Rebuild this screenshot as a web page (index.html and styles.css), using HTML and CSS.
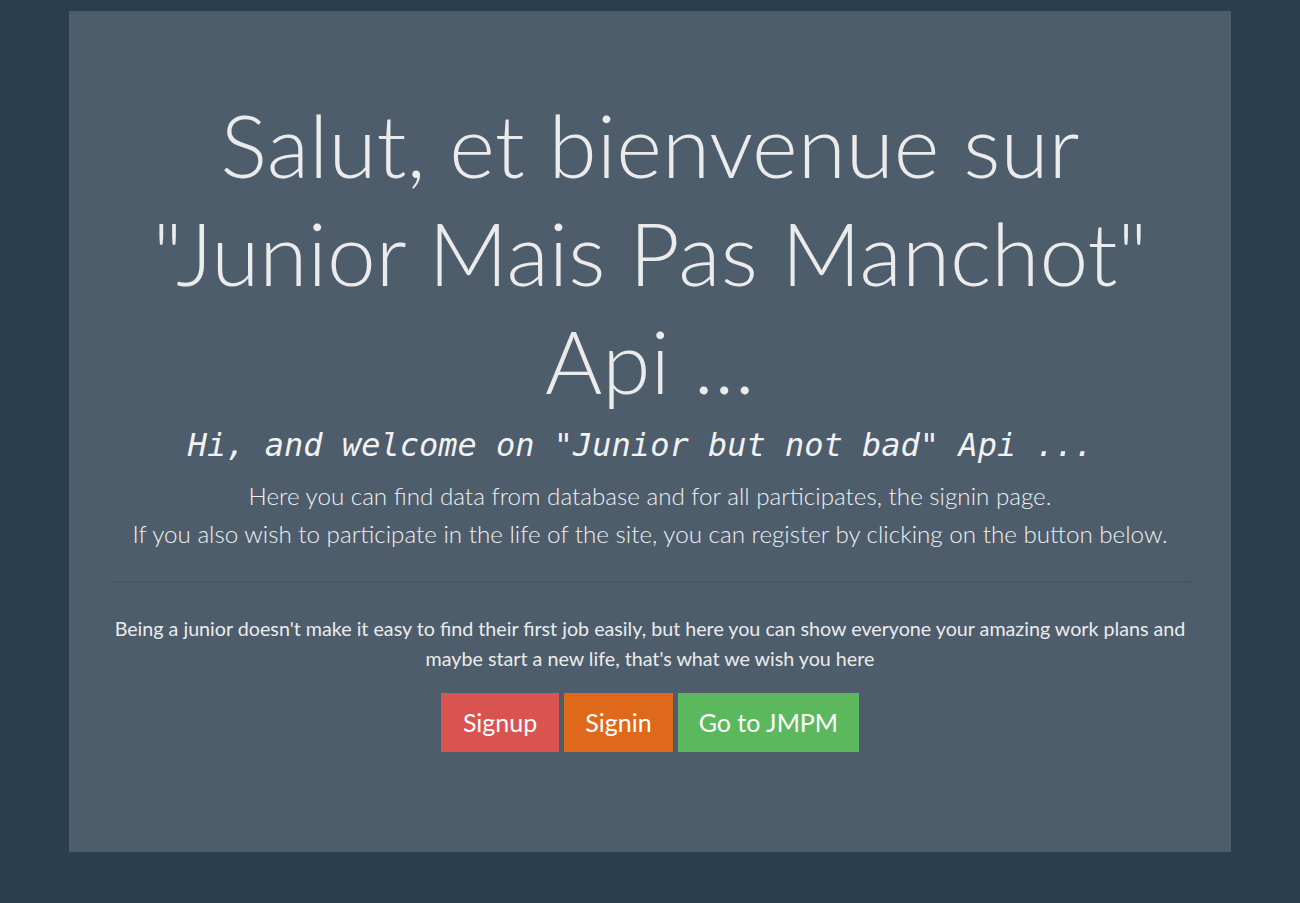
FILE: index.html
```html
<!DOCTYPE html>
<html lang="fr">
<head>
<meta charset="utf-8">
<title>JMPM Api</title>
<link rel="stylesheet" href="styles.css">
</head>
<body>
<div class="page">
  <div class="jumbotron">
    <h1 class="title">Salut, et bienvenue sur "Junior Mais Pas Manchot" Api ...</h1>
    <h3 class="subtitle">Hi, and welcome on "Junior but not bad" Api ...</h3>
    <p class="lead">Here you can find data from database and for all participates, the signin page.<br>If you also wish to participate in the life of the site, you can register by clicking on the button below.</p>
    <hr class="sep">
    <p class="info">Being a junior doesn't make it easy to find their first job easily, but here you can show everyone your amazing work plans and maybe start a new life, that's what we wish you here</p>
    <div class="actions">
      <a class="btn btn-danger" href="#">Signup</a>
      <a class="btn btn-warning" href="#">Signin</a>
      <a class="btn btn-success" href="#">Go to JMPM</a>
    </div>
  </div>
</div>
</body>
</html>
```
FILE: styles.css
```css
html, body {
  margin: 0;
  padding: 0;
}
body {
  background: #2b3e50;
  color: #ebebeb;
  font-family: Lato, "Open Sans", sans-serif;
  font-size: 15px;
  height: 903px;
}
.page {
  padding-top: 11px;
}
.jumbotron {
  width: 1162px;
  height: 841px;
  box-sizing: border-box;
  margin: 0 auto;
  background: #4e5d6c;
  padding: 80px 40px 0;
  text-align: center;
}
.title {
  margin: 0;
  font-family: Lato, sans-serif;
  font-weight: 300;
  font-size: 87.5px;
  line-height: 108px;
  color: #ebebeb;
}
.subtitle {
  margin: 10px 0 0;
  padding-right: 19px;
  font-family: "DejaVu Sans Mono", "Liberation Mono", monospace;
  font-style: italic;
  font-weight: normal;
  font-size: 32px;
  line-height: 40px;
  color: #f2f2f2;
}
.lead {
  margin: 12px 0 0;
  font-weight: 300;
  font-size: 24.2px;
  line-height: 38px;
  color: #f0f0f0;
}
.sep {
  margin: 28px 0 0;
  border: 0;
  border-top: 1px solid #46535f;
}
.info {
  margin: 32px 0 0;
  font-size: 19.7px;
  line-height: 30px;
  padding: 0 2px;
}
.actions {
  margin-top: 19px;
  display: flex;
  justify-content: center;
  gap: 5px;
}
.btn {
  display: inline-block;
  padding: 0 21px;
  height: 59px;
  line-height: 59px;
  font-size: 25px;
  color: #fff;
  text-decoration: none;
}
.btn-danger { background: #d9534f; padding: 0 22px; }
.btn-warning { background: #df691a; }
.btn-success { background: #5cb85c; }
```
